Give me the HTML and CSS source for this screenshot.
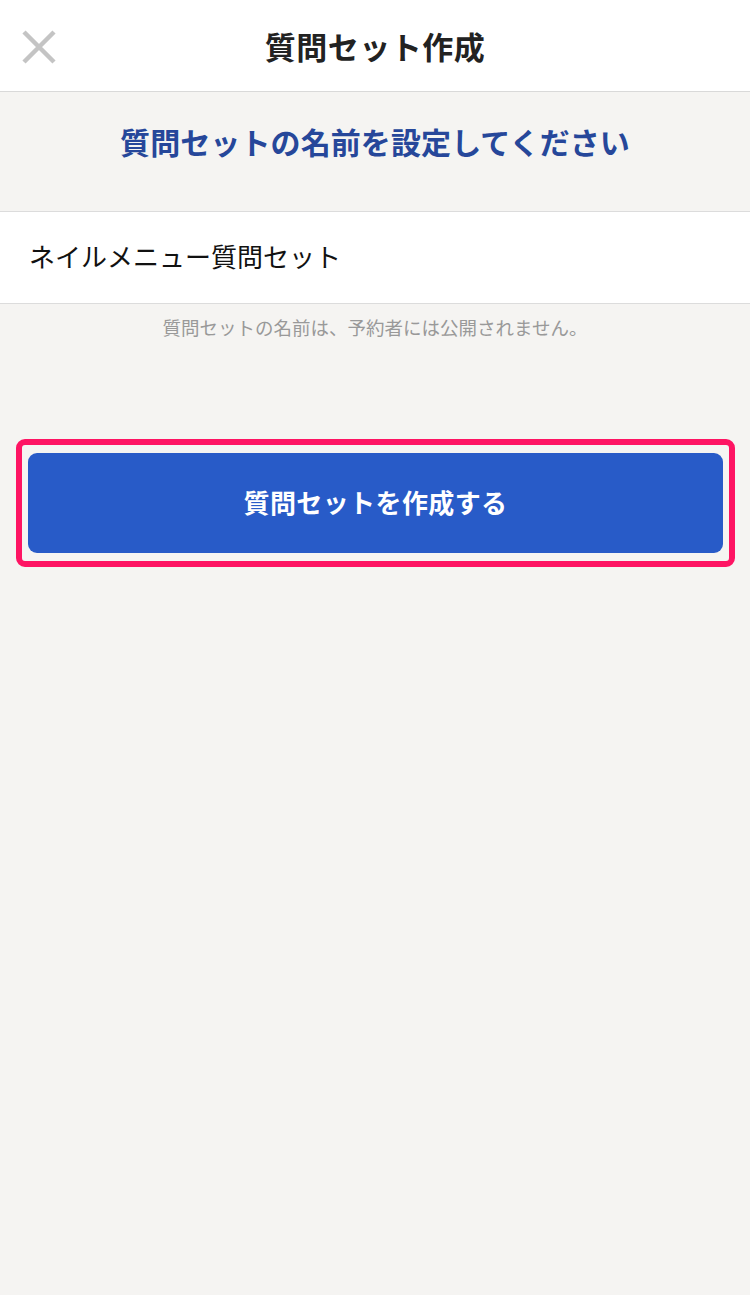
FILE: index.html
```html
<!DOCTYPE html>
<html lang="ja">
<head>
<meta charset="utf-8">
<title>質問セット作成</title>
<link rel="stylesheet" href="styles.css">
</head>
<body>
<header class="header">
  <button class="close" aria-label="閉じる">
    <svg width="34" height="34" viewBox="0 0 34 34"><path d="M2 2 L32 32 M32 2 L2 32" stroke="#c4c4c4" stroke-width="4.5" fill="none"/></svg>
  </button>
  <h1 class="title">質問セット作成</h1>
  <span></span>
</header>
<section class="lead">
  <h2 class="lead-text">質問セットの名前を設定してください</h2>
</section>
<div class="field">
  <span class="field-value">ネイルメニュー質問セット</span>
</div>
<p class="note">質問セットの名前は、予約者には公開されません。</p>
<div class="highlight">
  <button class="submit">質問セットを作成する</button>
</div>
</body>
</html>
```

FILE: styles.css
```css
html, body {
  margin: 0;
  padding: 0;
}
body {
  background: #f5f4f2;
  font-family: "Noto Sans CJK JP", "Noto Sans", sans-serif;
  width: 750px;
  min-height: 1295px;
}
.header {
  height: 91px;
  background: #fff;
  border-bottom: 1px solid #d9d9d9;
  display: grid;
  grid-template-columns: 1fr auto 1fr;
  align-items: center;
}
.close {
  justify-self: start;
  margin-left: 22px;
  margin-top: 2px;
  padding: 0;
  border: 0;
  background: none;
  width: 34px;
  height: 34px;
  display: flex;
}
.title {
  margin: 0;
  font-size: 31px;
  font-weight: 700;
  color: #222;
  line-height: 40px;
  letter-spacing: 0.5px;
}
.lead {
  height: 120px;
  box-sizing: border-box;
  padding-top: 29px;
  border-bottom: 1px solid #dcdcdc;
}
.lead-text {
  margin: 0;
  text-align: center;
  font-size: 30px;
  font-weight: 700;
  color: #26479a;
  line-height: 40px;
  letter-spacing: 0.1px;
}
.field {
  height: 92px;
  box-sizing: border-box;
  padding: 0 0 4px 29px;
  background: #fff;
  border-bottom: 1px solid #dcdcdc;
  display: flex;
  align-items: center;
}
.field-value {
  font-size: 26px;
  color: #111;
}
.note {
  margin: 10px 0 0;
  text-align: center;
  font-size: 18.5px;
  line-height: 26px;
  color: #999;
}
.highlight {
  margin: 99px 15px 0 16px;
  border: 6px solid #fe1463;
  border-radius: 9px;
  padding: 8px 6px;
  display: flex;
}
.submit {
  flex: 1;
  height: 100px;
  border: 0;
  border-radius: 9px;
  background: #285bc8;
  color: #fff;
  font-family: "Noto Sans CJK JP", "Noto Sans", sans-serif;
  font-size: 26px;
  font-weight: 700;
  letter-spacing: 0.4px;
  padding: 0 0 4px;
}
```
